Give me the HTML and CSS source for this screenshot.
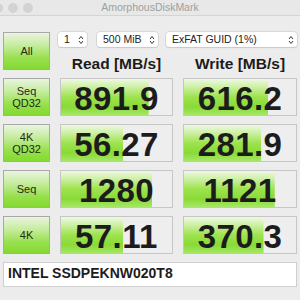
FILE: index.html
```html
<!DOCTYPE html>
<html lang="en">
<head>
  <meta charset="UTF-8">
  <title>AmorphousDiskMark</title>
  <link rel="stylesheet" href="styles.css">
</head>
<body>
  <div class="titlebar">
    <div class="lights"><span></span><span></span><span></span></div>
    <div class="title">AmorphousDiskMark</div>
  </div>

  <div class="main">
    <div class="top">
      <button class="test all">All</button>
      <div class="selects">
        <div class="select sel-count">1
          <svg viewBox="0 0 6 10" width="6" height="10"><path d="M1 4 L3 1.5 L5 4 M1 6 L3 8.5 L5 6" fill="none" stroke="#333" stroke-width="1"/></svg>
        </div>
        <div class="select sel-size">500 MiB
          <svg viewBox="0 0 6 10" width="6" height="10"><path d="M1 4 L3 1.5 L5 4 M1 6 L3 8.5 L5 6" fill="none" stroke="#333" stroke-width="1"/></svg>
        </div>
        <div class="select sel-drive">ExFAT GUID (1%)
          <svg viewBox="0 0 6 10" width="6" height="10"><path d="M1 4 L3 1.5 L5 4 M1 6 L3 8.5 L5 6" fill="none" stroke="#333" stroke-width="1"/></svg>
        </div>
      </div>
      <div class="head">Read [MB/s]</div>
      <div class="head">Write [MB/s]</div>
    </div>

    <div class="row">
      <button class="test">Seq<br>QD32</button>
      <div class="cell" style="--pct:79%">891.9</div>
      <div class="cell" style="--pct:75%">616.2</div>
    </div>
    <div class="row">
      <button class="test">4K<br>QD32</button>
      <div class="cell" style="--pct:56%">56.27</div>
      <div class="cell" style="--pct:69%">281.9</div>
    </div>
    <div class="row">
      <button class="test">Seq</button>
      <div class="cell" style="--pct:82%">1280</div>
      <div class="cell" style="--pct:81%">1121</div>
    </div>
    <div class="row">
      <button class="test">4K</button>
      <div class="cell" style="--pct:56%">57.11</div>
      <div class="cell" style="--pct:71%">370.3</div>
    </div>

    <div class="device">INTEL SSDPEKNW020T8</div>
  </div>
</body>
</html>
```

FILE: styles.css
```css
:root {
  --bg: #ececec;
  --cell-border: #c6c6c6;
  --text: #1c1c1c;
  --bar: linear-gradient(to bottom, #eef8e4 0%, #cdf0a4 22%, #9de34e 50%, #89da36 78%, #a6e766 100%);
  --btn: linear-gradient(to bottom, #eaf4e2 0%, #c4ec9c 35%, #98e04e 70%, #84da30 100%);
}
html, body {
  margin: 0;
  padding: 0;
  width: 300px;
  height: 300px;
  overflow: hidden;
  background: var(--bg);
  font-family: 'Liberation Sans', Arial, sans-serif;
  color: var(--text);
}
.titlebar {
  height: 15px;
  border-bottom: 1px solid #d4d4d4;
  background: #e8e8e8;
  display: grid;
  grid-template-columns: 1fr auto 1fr;
  align-items: center;
}
.lights {
  display: flex;
  gap: 5px;
  margin-left: -7px;
}
.lights span {
  width: 10px;
  height: 10px;
  border-radius: 50%;
  background: #d3d3d3;
}
.title {
  font-size: 10.5px;
  color: #a0a0a0;
  line-height: 15px;
}
.main {
  padding: 16px 3px 0 3px;
  display: flex;
  flex-direction: column;
  gap: 8px;
}
.top,
.row {
  display: grid;
  grid-template-columns: 47px 113px 114px;
  column-gap: 10px;
}
.top {
  grid-template-rows: 15px 23px;
}
.row {
  height: 38px;
}
.test {
  margin: 0;
  padding: 0;
  border: 1px solid #a9a9a9;
  background: var(--btn);
  font-family: 'Liberation Sans', Arial, sans-serif;
  font-size: 11px;
  line-height: 12px;
  color: #1d2a14;
  height: 38px;
}
.all {
  grid-row: 1 / 3;
}
.selects {
  grid-column: 2 / 4;
  display: flex;
  margin-left: -2px;
}
.select {
  height: 15px;
  box-sizing: border-box;
  background: #fff;
  border-radius: 3px;
  box-shadow: 0 0 0 0.5px #c4c4c4, 0 1px 1px rgba(0, 0, 0, 0.12);
  font-size: 10.5px;
  line-height: 15px;
  color: #222;
  display: flex;
  align-items: center;
  justify-content: space-between;
  padding: 0 3px 0 6px;
}
.sel-count {
  width: 29px;
  margin-right: 10px;
}
.sel-size {
  width: 61px;
  margin-right: 8px;
}
.sel-drive {
  flex: 1;
}
.head {
  align-self: end;
  text-align: center;
  font-size: 15.5px;
  font-weight: bold;
  line-height: 18px;
  margin-bottom: -3px;
}
.cell {
  box-sizing: border-box;
  border: 1px solid var(--cell-border);
  background: var(--bar) no-repeat, #eeeeee;
  background-size: var(--pct) 100%, auto;
  text-align: center;
  font-size: 33px;
  font-weight: bold;
  line-height: 32px;
  padding-top: 4px;
  letter-spacing: 0.4px;
}
.device {
  height: 25px;
  box-sizing: border-box;
  border: 1px solid #cfcfcf;
  background: #fff;
  font-size: 14px;
  font-weight: bold;
  line-height: 21px;
  padding-left: 4px;
}
```
